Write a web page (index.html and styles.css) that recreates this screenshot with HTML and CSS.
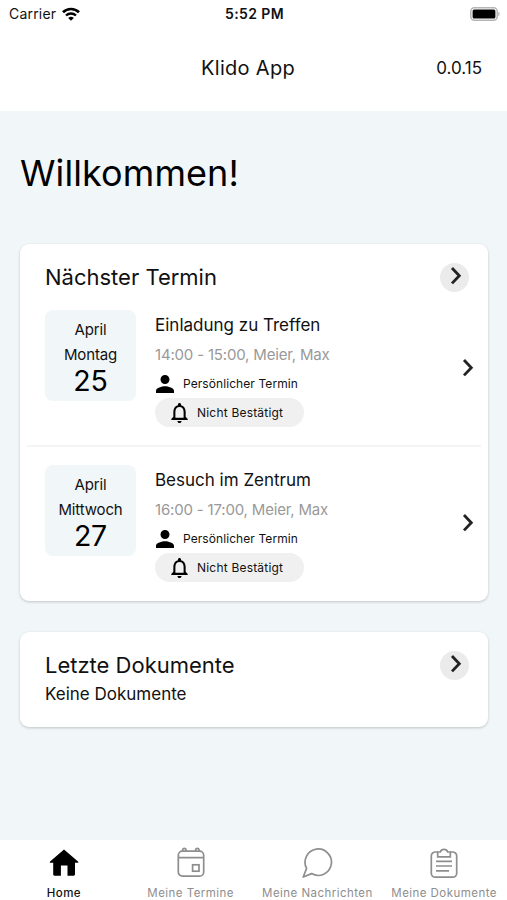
FILE: index.html
```html
<!DOCTYPE html>
<html lang="de">
<head>
  <meta charset="UTF-8" />
  <meta name="viewport" content="width=device-width, initial-scale=1.0" />
  <title>Klido App</title>
  <link rel="stylesheet" href="styles.css">
</head>
<body>
  <!-- icons that are used more than once -->
  <svg class="sprite">
    <symbol id="chevron" viewBox="0 0 12 20">
      <path d="M2 2l7.3 7.7L2 17.4" fill="none" stroke="#222" stroke-width="2.8" />
    </symbol>
    <symbol id="person" viewBox="4 4 16 16">
      <path d="M12 12c2.21 0 4-1.79 4-4s-1.79-4-4-4-4 1.79-4 4 1.79 4 4 4zm0 2c-2.67 0-8 1.34-8 4v2h16v-2c0-2.66-5.33-4-8-4z" />
    </symbol>
    <symbol id="bell" viewBox="4 2.5 16 19.5">
      <path d="M12 22c1.1 0 2-.9 2-2h-4c0 1.1.9 2 2 2zm6-6v-5c0-3.07-1.63-5.64-4.5-6.32V4c0-.83-.67-1.5-1.5-1.5s-1.5.67-1.5 1.5v.68C7.64 5.36 6 7.92 6 11v5l-2 2v1h16v-1l-2-2zm-2 1H8v-6c0-2.48 1.51-4.5 4-4.5s4 2.02 4 4.5v6z" />
    </symbol>
  </svg>

  <div class="statusbar">
    <div class="carrier">
      <span>Carrier</span>
      <svg class="wifi" viewBox="0 0 18 14">
        <path d="M1 5.2a11.6 11.6 0 0 1 16 0" fill="none" stroke="#000" stroke-width="2.7" />
        <path d="M4 8.5a7.3 7.3 0 0 1 10 0" fill="none" stroke="#000" stroke-width="2.4" />
        <path d="M9 13.8L6.2 11a4 4 0 0 1 5.6 0z" />
      </svg>
    </div>
    <div class="clock">5:52 PM</div>
    <svg class="battery" viewBox="0 0 30 14">
      <rect x="0.8" y="0.8" width="26.4" height="12.4" rx="3.6" fill="#fff" stroke="#b5b5b5" stroke-width="1.5" />
      <rect x="2.6" y="2.4" width="22.8" height="9.2" rx="1.6" />
      <path d="M28.4 4.8c1.6.7 1.6 3.7 0 4.4z" fill="#aaa" />
    </svg>
  </div>

  <header class="header">
    <h1 class="app-name">Klido App</h1>
    <span class="version">0.0.15</span>
  </header>

  <main class="content">
    <h2 class="welcome">Willkommen!</h2>

    <section class="card">
      <div class="card-head">
        <h3 class="card-title">Nächster Termin</h3>
        <button class="round-button" type="button"><svg class="chevron"><use href="#chevron" /></svg></button>
      </div>

      <div class="event">
        <div class="date">
          <span>April</span>
          <span>Montag</span>
          <span class="day">25</span>
        </div>
        <div class="details">
          <div class="event-title">Einladung zu Treffen</div>
          <div class="time">14:00 - 15:00, Meier, Max</div>
          <div class="kind"><svg class="person"><use href="#person" /></svg><span>Persönlicher Termin</span></div>
          <div class="state"><svg class="bell"><use href="#bell" /></svg><span>Nicht Bestätigt</span></div>
        </div>
        <svg class="chevron"><use href="#chevron" /></svg>
      </div>

      <hr class="divider">

      <div class="event">
        <div class="date">
          <span>April</span>
          <span>Mittwoch</span>
          <span class="day">27</span>
        </div>
        <div class="details">
          <div class="event-title">Besuch im Zentrum</div>
          <div class="time">16:00 - 17:00, Meier, Max</div>
          <div class="kind"><svg class="person"><use href="#person" /></svg><span>Persönlicher Termin</span></div>
          <div class="state"><svg class="bell"><use href="#bell" /></svg><span>Nicht Bestätigt</span></div>
        </div>
        <svg class="chevron"><use href="#chevron" /></svg>
      </div>
    </section>

    <section class="card documents">
      <div class="card-head">
        <h3 class="card-title">Letzte Dokumente</h3>
        <button class="round-button" type="button"><svg class="chevron"><use href="#chevron" /></svg></button>
      </div>
      <p class="empty">Keine Dokumente</p>
    </section>
  </main>

  <nav class="tabs">
    <a class="tab active">
      <svg class="tab-icon" viewBox="0 0 32 32">
        <path d="M16 2.6L30 14.4c.7.7.3 1.4-.5 1.4H27v11.5c0 .9-.5 1.4-1.4 1.4H19.5V18.6h-6.6v10.1H6.6c-.9 0-1.4-.5-1.4-1.4V15.8H2.6c-.8 0-1.2-.7-.5-1.4z" fill="#000" />
      </svg>
      <span>Home</span>
    </a>
    <a class="tab">
      <svg class="tab-icon line" viewBox="0 0 32 32">
        <rect x="3.3" y="4.2" width="25.4" height="25" rx="4.2" />
        <path d="M3.3 10.6h25.4M7.6 4V3a1.7 1.7 0 0 1 3.4 0v1M20.6 4V3A1.7 1.7 0 0 1 24 3v1" />
        <rect x="17.6" y="17.8" width="6.4" height="6.4" />
      </svg>
      <span>Meine Termine</span>
    </a>
    <a class="tab">
      <svg class="tab-icon line" viewBox="0 0 32 32">
        <path d="M2.2 30l3.4-8.6A13.2 13.2 0 1 1 10.6 26.6z" stroke-linejoin="round" />
      </svg>
      <span>Meine Nachrichten</span>
    </a>
    <a class="tab">
      <svg class="tab-icon line" viewBox="0 0 32 32">
        <path d="M9.7 5H7.3a4 4 0 0 0-4 4v17.2a4 4 0 0 0 4 4h17.4a4 4 0 0 0 4-4V9a4 4 0 0 0-4-4h-2.4" />
        <path d="M9.7 5h2.6a3.9 3.9 0 0 1 7.4 0h2.6v4.8H9.7zM8 14.3h16M8 19h16M8 23.8h13" />
      </svg>
      <span>Meine Dokumente</span>
    </a>
  </nav>
</body>
</html>
```

FILE: styles.css
```css
* {
  box-sizing: border-box;
}

body {
  margin: 0;
  height: 900px;
  display: flex;
  flex-direction: column;
  font-family: Inter, sans-serif;
  color: #111;
  background-color: #fff;
  overflow: hidden;
}

h1,
h2,
h3,
p {
  margin: 0;
  font-weight: normal;
}

.sprite {
  display: none;
}

/* status bar */
.statusbar {
  height: 27px;
  padding: 0 7px 0 9px;
  display: grid;
  grid-template-columns: 1fr auto 1fr;
  align-items: center;
  font-size: 14px;
}

.carrier {
  display: flex;
  align-items: center;
  gap: 6px;
  letter-spacing: 0.2px;
}

.wifi {
  width: 18px;
  height: 14px;
}

.clock {
  font-weight: 600;
  letter-spacing: 0.4px;
}

.battery {
  width: 30px;
  height: 14px;
  justify-self: end;
}

/* header */
.header {
  height: 84px;
  padding: 0 25px 2px 14px;
  display: grid;
  grid-template-columns: 1fr auto 1fr;
  align-items: center;
}

.app-name {
  grid-column: 2;
  font-size: 20px;
  letter-spacing: 0.3px;
}

.version {
  justify-self: end;
  font-size: 17px;
}

/* content */
.content {
  flex: 1;
  padding: 37px 19px 0 20px;
  background-color: #f1f6f9;
}

.welcome {
  height: 96px;
  font-size: 36px;
  line-height: 51px;
  letter-spacing: 0.1px;
  color: #000;
}

.card {
  height: 357px;
  padding-top: 15px;
  background-color: #fff;
  border-radius: 9px;
  box-shadow: 0 1px 3px rgba(0, 0, 0, 0.2);
}

.card.documents {
  height: 95px;
  margin-top: 31px;
}

.card-head {
  height: 36px;
  padding: 0 19px 0 25px;
  display: flex;
  justify-content: space-between;
  align-items: center;
}

.card-title {
  font-size: 22px;
}

.round-button {
  width: 29px;
  height: 29px;
  padding: 0 0 2px 2px;
  display: flex;
  justify-content: center;
  align-items: center;
  border: none;
  border-radius: 50%;
  background-color: #ebebeb;
}

.chevron {
  width: 12px;
  height: 20px;
}

.event {
  padding: 15px 14px 0 25px;
  display: flex;
}

.event > .chevron {
  align-self: center;
  margin-bottom: 2px;
}

.date {
  width: 91px;
  height: 91px;
  padding-top: 8px;
  display: flex;
  flex-direction: column;
  align-items: center;
  font-size: 15px;
  line-height: 24.5px;
  letter-spacing: -0.15px;
  background-color: #f1f6f9;
  border-radius: 8px;
}

.day {
  font-size: 28.5px;
  line-height: 28px;
  color: #000;
}

.details {
  flex: 1;
  margin-left: 19px;
}

.event-title {
  font-size: 17px;
  line-height: 30px;
}

.time {
  font-size: 15px;
  line-height: 29px;
  letter-spacing: -0.18px;
  color: #999;
}

.kind,
.state {
  height: 29px;
  display: flex;
  align-items: center;
  font-size: 12px;
  letter-spacing: 0.08px;
}

.person {
  width: 18px;
  height: 18px;
  margin: 0 9px 0 1px;
}

.state {
  width: 149px;
  padding-left: 16px;
  letter-spacing: 0.2px;
  background-color: #f0f0f0;
  border-radius: 15px;
}

.bell {
  width: 17px;
  height: 20px;
  margin-right: 9px;
}

.divider {
  margin: 18px 7px 3px;
  border: none;
  border-top: 2px solid #f3f4f5;
}

.empty {
  padding-left: 25px;
  font-size: 17px;
  line-height: 23px;
}

/* bottom tabs */
.tabs {
  height: 60px;
  display: flex;
}

.tab {
  width: 25%;
  padding: 7px 0 0 1px;
  display: flex;
  flex-direction: column;
  align-items: center;
  gap: 7px;
  font-size: 11.5px;
  line-height: 14px;
  letter-spacing: 0.45px;
  color: #8e8e8e;
  white-space: nowrap;
}

.tab.active {
  color: #111;
  font-weight: 500;
}

.tab-icon {
  width: 32px;
  height: 32px;
}

.line {
  fill: none;
  stroke: #8e8e8e;
  stroke-width: 1.7;
}
```
